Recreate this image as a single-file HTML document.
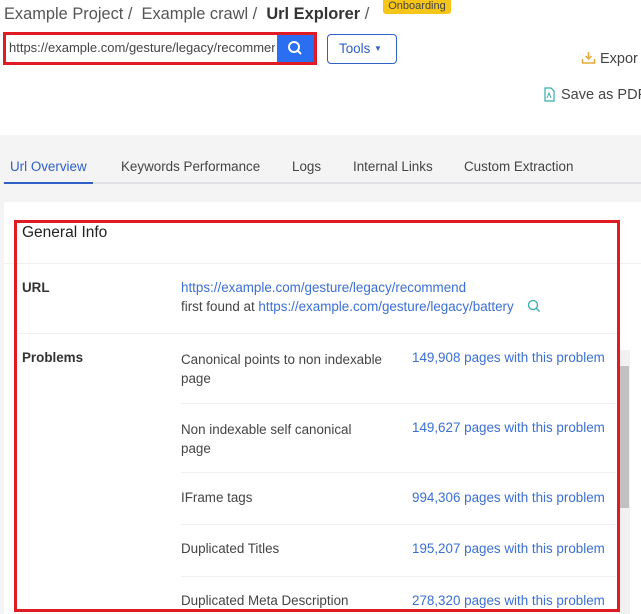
<!DOCTYPE html>
<html><head><meta charset="utf-8"><style>
*{margin:0;padding:0;box-sizing:border-box}
body{width:641px;height:614px;overflow:hidden;background:#fff;font-family:"Liberation Sans",sans-serif;color:#444;position:relative;font-size:13.4px}
.a{position:absolute;white-space:nowrap}
.l{color:#3b6fd4}
</style></head><body>
<div class="a" style="left:4px;top:5px;font-size:16.4px;color:#555">Example Project /&nbsp; Example crawl /&nbsp; <b style="color:#333">Url Explorer</b> /</div>
<div class="a" style="left:383px;top:0;width:68px;height:14px;background:#f5c518;border-radius:0 0 3px 3px;font-size:11px;color:#444;text-align:center;line-height:12px">Onboarding</div>
<div class="a" style="left:3px;top:32px;width:314px;height:33px;border:3px solid #e01b24;background:#fff"></div>
<div class="a" style="left:9px;top:40px;font-size:13px;color:#444;width:266px;overflow:hidden">https://example.com/gesture/legacy/recommend</div>
<div class="a" style="left:277px;top:35px;width:37px;height:27px;background:#2a6ef2">
<svg width="37" height="27"><circle cx="17" cy="12" r="5" stroke="#fff" stroke-width="2" fill="none"/><line x1="21" y1="16" x2="24" y2="19" stroke="#fff" stroke-width="2"/></svg></div>
<div class="a" style="left:327px;top:34px;width:70px;height:30px;border:1px solid #2f5fc7;border-radius:4px;color:#2f5fc7;font-size:13.4px;line-height:28px;padding-left:11px">Tools <span style="font-size:8px;vertical-align:2px">▼</span></div>
<svg class="a" style="left:581px;top:51px" width="15" height="14"><path d="M7.5 1v7M4.5 5l3 3 3-3M1.5 8v4h12V8" stroke="#e8a93a" stroke-width="1.5" fill="none"/></svg>
<div class="a" style="left:600px;top:51px;font-size:14.5px;color:#444">Expor</div>
<svg class="a" style="left:544px;top:87px" width="11" height="15"><path d="M1 1h6l3 3v10H1z" stroke="#3aa" stroke-width="1.2" fill="none"/><path d="M3 11l2-5 2 5" stroke="#3aa" fill="none"/></svg>
<div class="a" style="left:561px;top:87px;font-size:14.5px;color:#444">Save as PDF</div>
<div class="a" style="left:0;top:135px;width:641px;height:479px;background:#f4f4f5"></div>
<div class="a" style="left:10px;top:159px;color:#2f5fc7">Url Overview</div>
<div class="a" style="left:121px;top:159px">Keywords Performance</div>
<div class="a" style="left:292px;top:159px">Logs</div>
<div class="a" style="left:353px;top:159px">Internal Links</div>
<div class="a" style="left:464px;top:159px">Custom Extraction</div>
<div class="a" style="left:3px;top:182px;width:638px;height:2px;background:#e2e2e6"></div>
<div class="a" style="left:4px;top:182px;width:89px;height:2px;background:#2f5fc7"></div>
<div class="a" style="left:4px;top:202px;width:637px;height:412px;background:#fff"></div>
<div class="a" style="left:4px;top:263px;width:637px;height:1px;background:#f0f0f0"></div>
<div class="a" style="left:18px;top:333px;width:600px;height:1px;background:#f0f0f0"></div>
<div class="a" style="left:22px;top:224px;font-size:15.5px;color:#222">General Info</div>
<div class="a" style="left:22px;top:280px;font-weight:bold;color:#333">URL</div>
<div class="a l" style="left:181px;top:280px">https://example.com/gesture/legacy/recommend</div>
<div class="a" style="left:181px;top:299px">first found at <span class="l">https://example.com/gesture/legacy/battery</span></div>
<svg class="a" style="left:527px;top:299px" width="14" height="14"><circle cx="6" cy="6" r="4.5" stroke="#3aa" stroke-width="1.3" fill="none"/><line x1="9.2" y1="9.2" x2="12.5" y2="12.5" stroke="#3aa" stroke-width="1.3"/></svg>
<div class="a" style="left:22px;top:350px;font-weight:bold;color:#333">Problems</div>
<div class="a" style="left:181px;top:350px;line-height:19px">Canonical points to non indexable<br>page</div>
<div class="a l" style="left:412px;top:350px">149,908 pages with this problem</div>
<div class="a" style="left:181px;top:403px;width:435px;height:1px;background:#f0f0f0"></div>
<div class="a" style="left:181px;top:420px;line-height:19px">Non indexable self canonical<br>page</div>
<div class="a l" style="left:412px;top:420px">149,627 pages with this problem</div>
<div class="a" style="left:181px;top:472px;width:435px;height:1px;background:#f0f0f0"></div>
<div class="a" style="left:181px;top:490px">IFrame tags</div>
<div class="a l" style="left:412px;top:490px">994,306 pages with this problem</div>
<div class="a" style="left:181px;top:524px;width:435px;height:1px;background:#f0f0f0"></div>
<div class="a" style="left:181px;top:541px">Duplicated Titles</div>
<div class="a l" style="left:412px;top:541px">195,207 pages with this problem</div>
<div class="a" style="left:181px;top:576px;width:435px;height:1px;background:#f0f0f0"></div>
<div class="a" style="left:181px;top:593px">Duplicated Meta Description</div>
<div class="a l" style="left:412px;top:593px">278,320 pages with this problem</div>
<div class="a" style="left:619px;top:350px;width:11px;height:264px;background:#f1f1f1"></div>
<div class="a" style="left:620px;top:366px;width:9px;height:142px;background:#c1c1c1"></div>
<div class="a" style="left:14px;top:220px;width:606px;height:392px;border:3px solid #e01b24"></div>
</body></html>
